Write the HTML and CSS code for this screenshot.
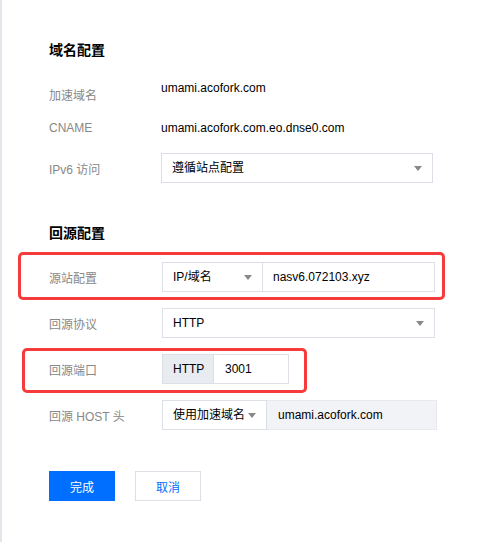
FILE: index.html
```html
<!DOCTYPE html>
<html lang="zh-CN">

<head>
    <meta charset="UTF-8">
    <meta name="viewport" content="width=device-width, initial-scale=1.0">
    <title>域名配置</title>
    <link rel="stylesheet" href="styles.css">
</head>

<body>
    <div class="panel">
        <h3 class="section-title">域名配置</h3>
        <div class="row row-first">
            <span class="label label-low">加速域名</span>
            <span class="value">umami.acofork.com</span>
        </div>
        <div class="row">
            <span class="label">CNAME</span>
            <span class="value">umami.acofork.com.eo.dnse0.com</span>
        </div>
        <div class="row">
            <span class="label">IPv6 访问</span>
            <div class="select select-wide">遵循站点配置<i class="caret"></i></div>
        </div>

        <h3 class="section-title section-gap">回源配置</h3>
        <div class="row row-origin marked">
            <span class="label wide">源站配置</span>
            <div class="group">
                <div class="select select-type">IP/域名<i class="caret"></i></div>
                <div class="input input-host">nasv6.072103.xyz</div>
            </div>
            <span class="mark mark-origin"></span>
        </div>
        <div class="row row-loose">
            <span class="label wide">回源协议</span>
            <div class="select select-proto">HTTP<i class="caret"></i></div>
        </div>
        <div class="row row-loose marked">
            <span class="label wide">回源端口</span>
            <div class="group">
                <div class="addon">HTTP</div>
                <div class="input input-port">3001</div>
            </div>
            <span class="mark mark-port"></span>
        </div>
        <div class="row row-loose">
            <span class="label wide">回源 HOST 头</span>
            <div class="group">
                <div class="select select-host">使用加速域名<i class="caret"></i></div>
                <div class="input input-disabled">umami.acofork.com</div>
            </div>
        </div>

        <div class="actions">
            <button type="button" class="btn btn-primary">完成</button>
            <button type="button" class="btn">取消</button>
        </div>
    </div>
</body>

</html>
```

FILE: styles.css
```css
body {
    margin: 0;
    background-color: white;
    font-family: "Liberation Sans", Arial, "Noto Sans CJK SC", sans-serif;
    font-size: 12px;
    color: #000;
}
.panel {
    min-height: 542px;
    box-sizing: border-box;
    border-left: 2px solid #e3e5ea;
    padding: 40px 0 0 47px;
}
.section-title {
    margin: 0;
    font-size: 14px;
    line-height: 20px;
    font-weight: bold;
}
.section-gap {
    margin-top: 40px;
}
.row {
    display: flex;
    align-items: center;
    height: 30px;
    margin-top: 10px;
}
.row-first {
    margin-top: 13px;
}
.row-origin {
    margin-top: 19px;
}
.row-loose {
    margin-top: 16px;
}
.marked {
    position: relative;
}
.label {
    width: 112px;
    flex-shrink: 0;
    color: #888;
}
.label.wide {
    width: 113px;
}
.label-low {
    padding-top: 13px;
}
.value {
    line-height: 20px;
}
.group {
    display: flex;
}
.select,
.input,
.addon {
    box-sizing: border-box;
    height: 30px;
    line-height: 28px;
    padding: 0 10px;
    border: 1px solid #dcdfe6;
    background-color: white;
    white-space: nowrap;
}
.select {
    position: relative;
}
.select-wide {
    width: 272px;
}
.select-proto {
    width: 273px;
}
.select-type {
    width: 101px;
}
.select-host {
    width: 105px;
}
.caret {
    position: absolute;
    right: 10px;
    top: 12px;
    width: 0;
    height: 0;
    border-left: 4px solid transparent;
    border-right: 4px solid transparent;
    border-top: 5px solid #888;
}
.input {
    border-left: none;
}
.input-host {
    width: 172px;
}
.input-port {
    width: 75px;
    padding-left: 11px;
}
.input-disabled {
    width: 170px;
    padding-left: 11px;
    background-color: #f2f3f6;
    border-color: #e8eaee;
}
.addon {
    width: 52px;
    background-color: #e8ebf0;
}
.mark {
    position: absolute;
    border: 3px solid #f53b3b;
    border-radius: 5px;
    pointer-events: none;
}
.mark-origin {
    left: -31px;
    top: -10px;
    width: 421px;
    height: 42px;
}
.mark-port {
    left: -27px;
    top: -6px;
    width: 279px;
    height: 39px;
}
.actions {
    display: flex;
    gap: 20px;
    margin-top: 41px;
}
.btn {
    width: 66px;
    height: 30px;
    padding: 0;
    font-family: inherit;
    font-size: 12px;
    color: #006eff;
    background-color: white;
    border: 1px solid #dcdfe6;
    cursor: pointer;
}
.btn-primary {
    color: white;
    background-color: #006eff;
    border-color: #006eff;
}
```
